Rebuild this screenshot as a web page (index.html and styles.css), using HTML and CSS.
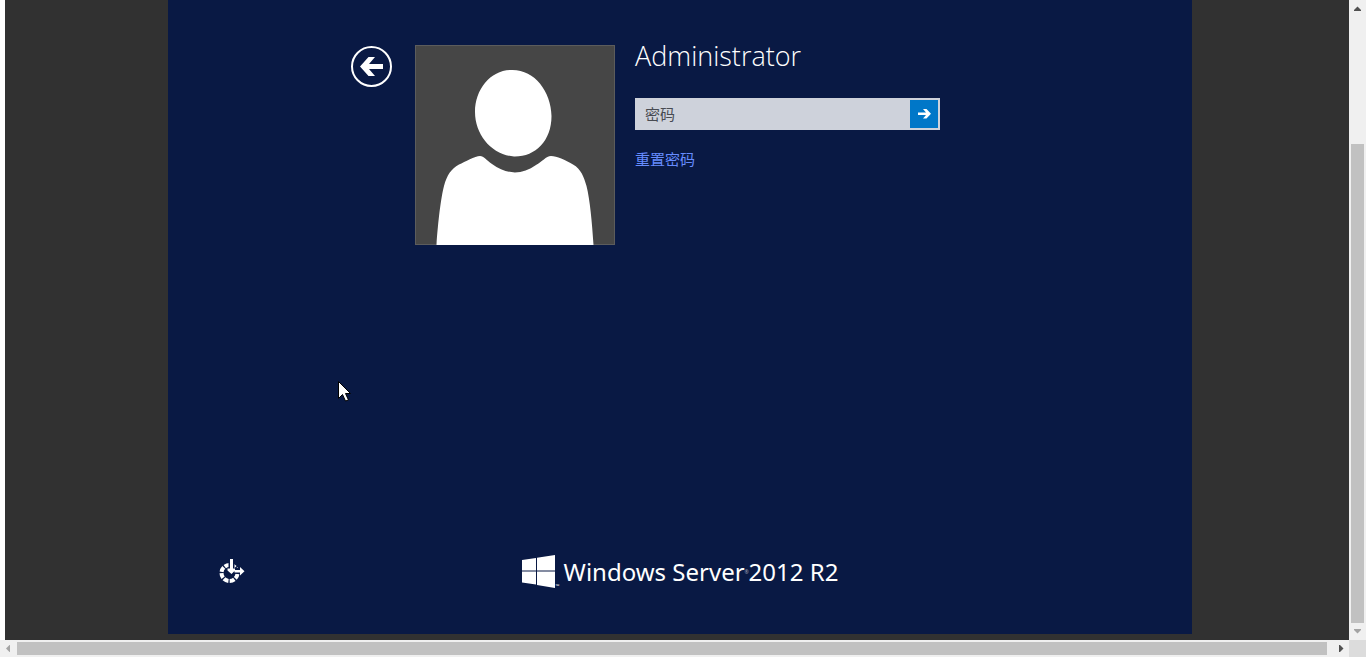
FILE: index.html
```
<!DOCTYPE html>
<html lang="zh-CN">
<head>
<meta charset="utf-8">
<title>Windows Server 2012 R2</title>
<link rel="stylesheet" href="styles.css">
</head>
<body>
<div class="viewer">
  <div class="stage">
    <main class="screen">
      <section class="login">
        <button class="back" type="button" aria-label="返回">
          <svg viewBox="0 0 42 42" width="42" height="42"><circle cx="21.500" cy="21.500" r="19.500" fill="none" stroke="#fff" stroke-width="2"/><path d="M10 21.500 18.500 12H25L19 19H33V24H19L25 31H18.500Z" fill="#fff"/></svg>
        </button>
        <svg class="avatar" viewBox="0 0 200 200" aria-hidden="true"><rect width="200" height="200" fill="#464646"/><rect x=".5" y=".5" width="199" height="199" fill="none" stroke="#5c5c5c"/><path d="M96 25C119 24 136 46 136.500 71C136.500 96 120 112 99 111.500C77 110 60 90 60 67C60 44 76 25 96 25ZM21.500 200C23 177 26 152 29 141C32 130 36 124 44 119.500C50 117 60 111 65 111C69 111 71 115 77 119C92 130 107 130 121 120C127 117 131 111 136 111C142 111 150 115 158 119.500C166 124 169 132 171.500 141C175 155 177 177 178.500 200Z" fill="#fff"/></svg>
        <form class="account">
          <h1 class="name">Administrator</h1>
          <div class="field">
            <input class="password" type="password" placeholder="密码" aria-label="密码">
            <button class="submit" type="button" aria-label="提交">
              <svg viewBox="0 0 28 28" width="28" height="28"><path d="M8 12.500H16L13 9H16.500L21 13.700 16.500 18.500H13L16 15H8Z" fill="#fff"/></svg>
            </button>
          </div>
          <a class="reset" href="#">重置密码</a>
        </form>
      </section>
      <footer class="footer">
        <button class="ease" type="button" aria-label="轻松使用">
          <svg viewBox="0 0 26 26" width="26" height="26"><circle cx="10.500" cy="14" r="8" fill="none" stroke="#fff" stroke-width="4" stroke-dasharray="5 1.283" stroke-dashoffset="-1"/><path d="M9.500 0H15.500V9H26V14.500H15L12.500 17 7 11.500 9.500 9Z" fill="#091944"/><path d="M11 0H14V9.500L16 9.500V11.500L12.500 15 8.500 11.500V9.500H11ZM15.500 11H21V8L25.500 12.200 21 16.500V13.500H15.500Z" fill="#fff"/></svg>
        </button>
        <div class="brand">
          <svg class="flag" viewBox="0 0 34 34" width="34" height="34"><path d="M0 5 14 3V15.500H0ZM15 2.800 33 0V15.500H15ZM0 16.500H14V29.500L0 27.500ZM15 16.500H33V33L15 30Z" fill="#fff"/></svg>
          <span class="tm">™</span>
          <span class="product">Windows Server</span>
          <span class="dot">®</span>
          <span class="product">2012 R2</span>
        </div>
      </footer>
    </main>
    <svg class="cursor" viewBox="0 0 13 21" width="13" height="21" aria-hidden="true"><path d="M.5.500V17.500L4.500 13.500 7.500 20 10.500 19 7.500 12.500H12.500Z" fill="#fff" stroke="#000"/></svg>
  </div>
  <div class="bar bar-y">
    <svg class="tip" viewBox="0 0 17 17"><path d="M5 11H12V10L8.500 6.500 5 10Z" fill="#505050"/></svg>
    <div class="track-y"><div class="thumb"></div></div>
    <svg class="tip" viewBox="0 0 17 17"><path d="M5 6H12V7L8.500 10.500 5 7Z" fill="#a3a3a3"/></svg>
  </div>
  <div class="bar bar-x">
    <svg class="tip" viewBox="0 0 17 17"><path d="M10 5V12H9.500L6 8.500 9.500 5Z" fill="#a3a3a3"/></svg>
    <div class="track-x"><div class="thumb"></div></div>
    <svg class="tip" viewBox="0 0 17 17"><path d="M7 5V12H8L11.500 8.500 8 5Z" fill="#505050"/></svg>
  </div>
  <div class="corner"></div>
</div>
</body>
</html>
```
FILE: styles.css
```
* {
  box-sizing: border-box;
}

body {
  margin: 0;
  background: #fff;
  font-family: "Open Sans", "Noto Sans CJK SC", sans-serif;
}

button {
  padding: 0;
  border: 0;
  background: none;
  cursor: pointer;
}

svg {
  display: block;
}

.viewer {
  display: grid;
  grid-template-columns: minmax(0, 1fr) 17px;
  grid-template-rows: minmax(0, 1fr) 17px;
  height: 100vh;
}

.stage {
  position: relative;
  display: flex;
  justify-content: center;
  margin-left: 5px;
  padding: 0 0 6px 6px;
  background: #313131;
}

.screen {
  display: flex;
  flex-direction: column;
  justify-content: space-between;
  width: 100%;
  max-width: 1024px;
  padding: 45px 0 44px;
  background: #091944;
}

.login {
  display: flex;
  align-items: flex-start;
  padding-left: 182px;
}

.avatar {
  width: 200px;
  height: 200px;
  margin: 0 20px 0 23px;
}

.account {
  width: 305px;
}

.name {
  margin: -9px 0 22px;
  color: #fff;
  font-size: 27px;
  font-weight: 300;
  line-height: 40px;
}

.field {
  display: flex;
  height: 32px;
  padding: 2px;
  background: #ced2db;
}

.password {
  flex: 1;
  min-width: 0;
  padding: 0 8px;
  border: 0;
  outline: 0;
  background: none;
  color: #333;
  font: 15px "Open Sans", "Noto Sans CJK SC", sans-serif;
}

.password::placeholder {
  color: #484b52;
  opacity: 1;
}

.submit {
  background: #0077c8;
}

.reset {
  display: inline-block;
  margin-top: 18px;
  color: #668cff;
  font-size: 15px;
  line-height: 22px;
  text-decoration: none;
}

.footer {
  display: grid;
  grid-template-columns: 1fr auto 1fr;
  align-items: center;
}

.ease {
  justify-self: start;
  margin-left: 51px;
}

.brand {
  display: flex;
  align-items: center;
  height: 36px;
  color: #fff;
}

.product {
  font-family: "Noto Sans", sans-serif;
  font-size: 24px;
  line-height: 34px;
  white-space: nowrap;
}

.tm,
.dot {
  font-size: 5px;
  line-height: 8px;
}

.tm {
  align-self: flex-end;
  width: 8px;
}

.dot {
  width: 4px;
  opacity: 0.6;
}

.cursor {
  position: absolute;
  top: 381px;
  left: 333px;
}

.bar {
  display: flex;
  background: #f0f0f0;
}

.bar-y {
  flex-direction: column;
}

.tip {
  flex: none;
  width: 17px;
  height: 17px;
}

.track-y,
.track-x {
  display: flex;
  flex: 1;
  justify-content: flex-end;
}

.track-y {
  flex-direction: column;
  padding: 0 2px;
}

.track-x {
  padding: 2px 5px 2px 0;
}

.thumb {
  background: #c1c1c1;
}

.track-y .thumb {
  height: 79%;
}

.track-x .thumb {
  width: 100%;
}

.corner {
  background: #dcdcdc;
}
```
